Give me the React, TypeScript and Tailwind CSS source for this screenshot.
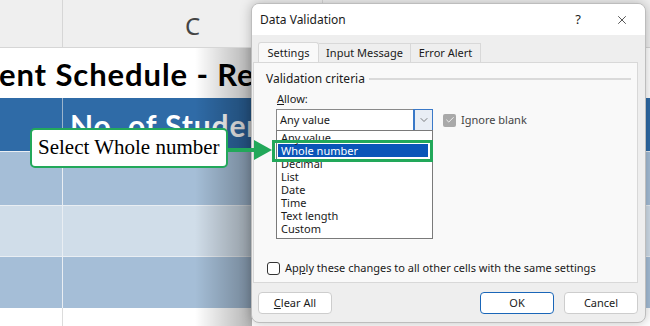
import { Check, ChevronDown, X } from 'lucide-react'

const ui = { fontFamily: '"Noto Sans", "Open Sans", sans-serif' }
const sheetFont = { fontFamily: 'Lato, "Open Sans", sans-serif' }

const options = ['Any value', 'Whole number', 'Decimal', 'List', 'Date', 'Time', 'Text length', 'Custom']

function Sheet() {
    return (
        <div className="flex flex-col w-[650px] h-[326px]">
            <div className="flex h-[48px] bg-[#efefef] border-b border-[#d6d6d6]">
                <div className="w-[63px] border-r border-[#d6d6d6]" />
                <div className="w-[260px] border-r border-[#d6d6d6] flex items-center justify-center pt-[4px] text-[24px] text-[#444]" style={ui}>C</div>
                <div className="flex-1" />
            </div>
            <div className="flex items-center h-[50px] pt-[3px] bg-white whitespace-nowrap overflow-hidden">
                <span className="text-[31px] font-bold tracking-[0.9px] text-black -ml-[1px]" style={sheetFont}>
                    ent Schedule - Report (
                </span>
            </div>
            <div className="flex h-[53px] bg-[#2f6ba7]">
                <div className="w-[63px] border-r border-[#e5e5e5]/60" />
                <div className="flex-1 pl-[7px] pt-[5px] text-[30px] font-bold tracking-[0.9px] text-white whitespace-nowrap overflow-hidden" style={sheetFont}>
                    No. of Students
                </div>
            </div>
            <div className="flex h-[55px] bg-[#a5bed7] border-t border-b border-[#e9eef3]">
                <div className="w-[63px] border-r border-[#e9eef3]" />
            </div>
            <div className="flex h-[50px] bg-[#d0dde9]">
                <div className="w-[63px] border-r border-[#e9eef3]" />
            </div>
            <div className="flex h-[52px] bg-[#a5bed7] border-t border-[#e9eef3]">
                <div className="w-[63px] border-r border-[#e9eef3]" />
            </div>
            <div className="flex flex-1 bg-white">
                <div className="w-[63px] border-r border-[#dcdcdc]" />
            </div>
        </div>
    )
}

function Button({ label, primary }: { label: React.ReactNode; primary?: boolean }) {
    return (
        <div
            className={`w-[74px] h-[22px] flex items-center justify-center rounded-[4px] bg-white text-[11px] text-[#1a1a1a] border ${primary ? 'border-[#1a66b8]' : 'border-[#cdcdcd]'}`}
        >
            {label}
        </div>
    )
}

function Dialog() {
    return (
        <div className="absolute left-[251px] top-[3px] w-[395px] h-[320px] rounded-[8px] border border-[#bdbdbd] bg-[#eeeeee] overflow-hidden shadow-[0_0_12px_rgba(0,0,0,0.25)] flex flex-col text-[#1a1a1a]" style={ui}>
            <div className="h-[31px] bg-white flex items-center pl-[8px] pr-[16px] text-[12px]">
                <span className="flex-1">Data Validation</span>
                <span className="mr-[34px] text-[13px]">?</span>
                <X className="w-[14px] h-[14px] text-[#222]" strokeWidth={1.3} />
            </div>
            <div className="flex items-end pl-[6px] pt-[6px] text-[11px]">
                <div className="w-[61px] h-[21px] flex items-center justify-center bg-[#f9f9f9] border border-b-0 border-[#d8d8d8] rounded-t-[3px] relative top-[1px]">
                    Settings
                </div>
                <div className="w-[92px] h-[19px] flex items-center justify-center border border-b-0 border-l-0 border-[#d8d8d8]">
                    Input Message
                </div>
                <div className="w-[70px] h-[19px] flex items-center justify-center border border-b-0 border-l-0 border-[#d8d8d8]">
                    Error Alert
                </div>
            </div>
            <div className="relative mx-[1px] w-[385px] h-[221px] bg-[#f9f9f9] border border-[#d8d8d8] text-[11px]">
                <div className="flex items-center pl-[12px] pr-[6px] mt-[9px] h-[14px] gap-[4px]">
                    <span className="text-[12px]">Validation criteria</span>
                    <div className="flex-1 h-[2px] bg-[#dadada]" />
                </div>
                <div className="pl-[23px] mt-[6px] h-[14px] leading-[14px]">
                    <span className="underline">A</span>llow:
                </div>
                <div className="flex items-center mt-[3px] pl-[22px]">
                    <div className="flex w-[157px] h-[22px] bg-white border border-[#8a8a8a]">
                        <span className="flex-1 pl-[3px] leading-[20px]">Any value</span>
                        <div className="w-[18px] flex items-center justify-center bg-[#e9eef5] border-l border-[#3a79c8] outline outline-1 outline-[#3a79c8]">
                            <ChevronDown className="w-[12px] h-[12px] text-[#555]" strokeWidth={1.5} />
                        </div>
                    </div>
                    <div className="ml-[10px] w-[13px] h-[13px] rounded-[2px] bg-[#a9a9a9] flex items-center justify-center">
                        <Check className="w-[10px] h-[10px] text-white" strokeWidth={2} />
                    </div>
                    <span className="ml-[5px] text-[#444]">Ignore blank</span>
                </div>
                <div className="absolute left-[13px] top-[197px] flex items-center gap-[5px]">
                    <div className="w-[13px] h-[13px] rounded-[3px] border border-[#333] bg-white" />
                    <span>
                        Ap<span className="underline">p</span>ly these changes to all other cells with the same settings
                    </span>
                </div>
                <div className="absolute left-[22px] top-[67px] w-[157px] h-[109px] bg-white border border-[#7a7a7a]">
                    {options.map((o) => (
                        <div
                            key={o}
                            className={`h-[13px] leading-[13px] pl-[3px] mx-[1px] ${o === 'Whole number' ? 'bg-[#0a55b8] text-white mr-[4px]' : ''}`}
                        >
                            {o}
                        </div>
                    ))}
                </div>
            </div>
            <div className="flex items-center mt-[9px] pl-[6px] pr-[7px]">
                <Button label={<><span className="underline">C</span>lear All</>} />
                <div className="flex-1" />
                <Button label="OK" primary />
                <div className="w-[10px]" />
                <Button label="Cancel" />
            </div>
        </div>
    )
}

export default function App() {
    return (
        <div className="relative w-[650px] h-[326px] overflow-hidden bg-white">
            <Sheet />
            <div className="absolute left-[195px] top-[48px] w-[57px] bottom-0 bg-gradient-to-r from-transparent to-black/30" />
            <Dialog />
            {/* highlight around Whole number */}
            <div className="absolute left-[272px] top-[140px] w-[161px] h-[22px] border-[3px] border-[#22a85a]" />
            {/* arrow */}
            <div className="absolute left-[227px] top-[148px] w-[30px] h-[4px] bg-[#22a85a]" />
            <svg className="absolute left-[254px] top-[140px]" width="18" height="20" viewBox="0 0 18 20">
                <polygon points="0,0 18,10 0,20" fill="#22a85a" />
            </svg>
            <div
                className="absolute left-[30px] top-[128px] w-[198px] h-[40px] rounded-[5px] bg-white border-2 border-[#22a85a] flex items-center pl-[6px] text-[21px] text-black whitespace-nowrap"
                style={{ fontFamily: '"Liberation Serif", "DejaVu Serif", serif' }}
            >
                Select Whole number
            </div>
        </div>
    )
}
